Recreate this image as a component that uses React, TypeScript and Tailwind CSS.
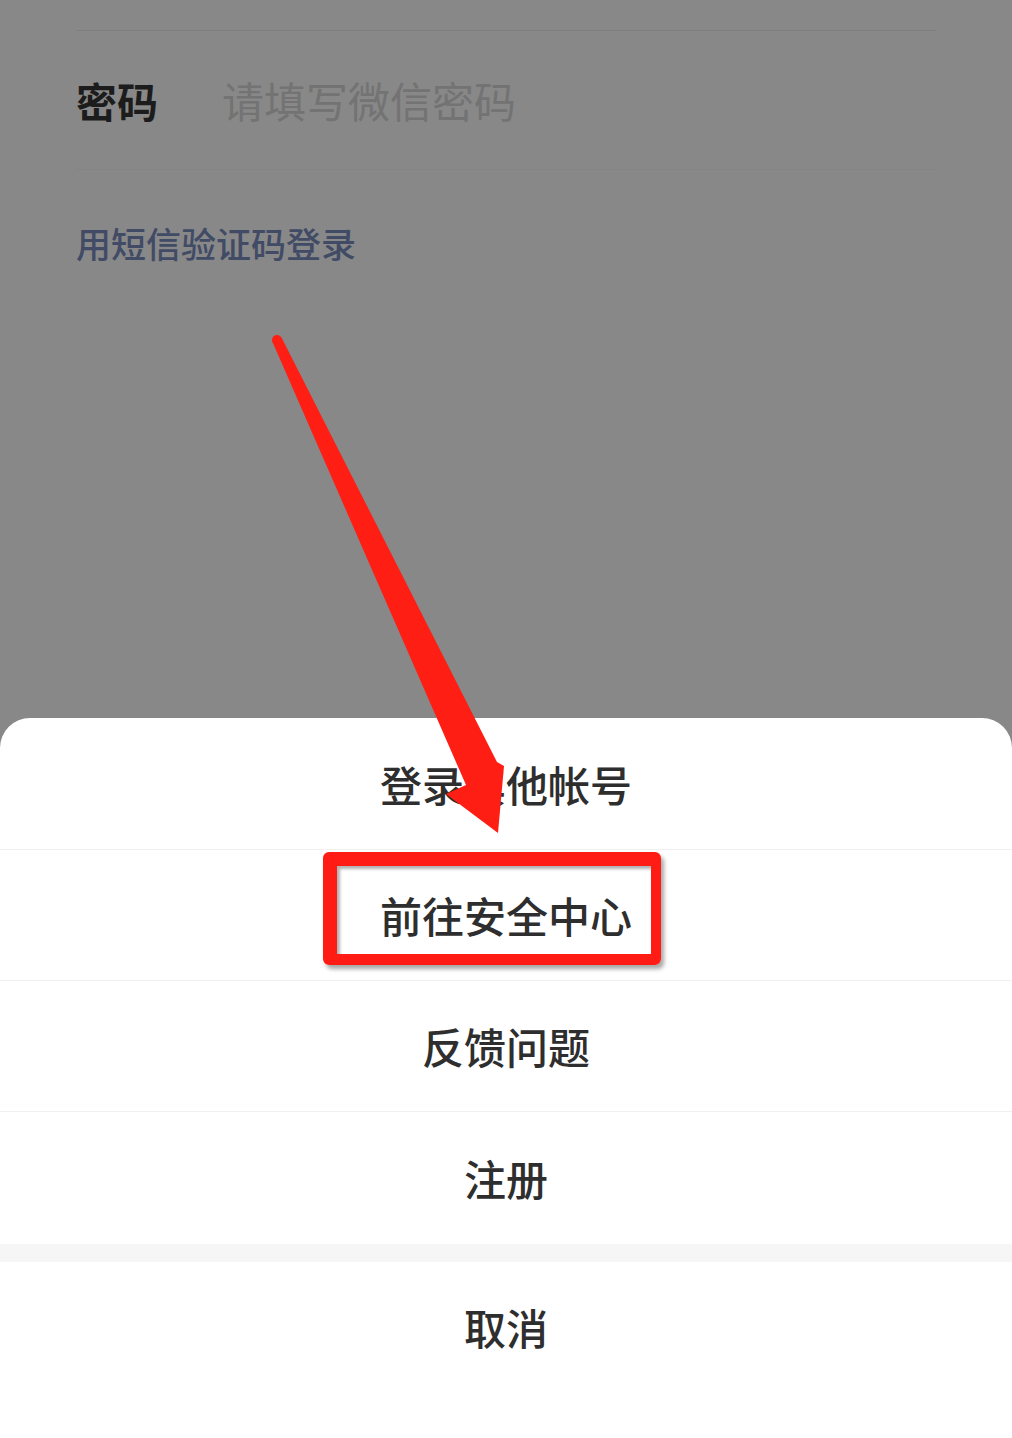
import React from "react";

const font = { fontFamily: '"Noto Sans CJK SC", "Noto Sans", sans-serif' };

function Row({ label, h, border = true }: { label: string; h: string; border?: boolean }) {
  return (
    <div
      className={`${h} flex items-center justify-center ${border ? "border-b border-[#f0f0f0]" : ""}`}
    >
      <span className="text-[42px] leading-none font-medium text-[#2e2e2e]">{label}</span>
    </div>
  );
}

export default function App() {
  return (
    <div className="relative w-[1012px] h-[1438px] overflow-hidden bg-[#888888] flex flex-col" style={font}>
      <div className="h-[718px] shrink-0 px-[76px] pt-[30px]">
        <div className="border-t border-[#7f7f7f]" />
        <div className="h-[139px] flex items-center border-b border-[#848484]">
          <span className="w-[146px] text-[41px] leading-none font-bold text-[#1c1c1c]">密码</span>
          <span className="text-[42px] leading-none text-[#737373]">请填写微信密码</span>
        </div>
        <div className="mt-[55px] text-[35px] leading-none font-medium text-[#414b66]">用短信验证码登录</div>
      </div>

      <div className="flex-1 bg-white rounded-t-[30px] flex flex-col">
        <Row label="登录其他帐号" h="h-[132px]" />
        <Row label="前往安全中心" h="h-[131px]" />
        <Row label="反馈问题" h="h-[131px]" />
        <Row label="注册" h="h-[132px]" border={false} />
        <div className="h-[18px] bg-[#f6f6f6]" />
        <Row label="取消" h="h-[130px]" border={false} />
      </div>

      {/* Red highlight box */}
      <div className="absolute left-[323px] top-[852px] w-[338px] h-[113px] rounded-[6px] border-t-[14px] border-l-[14px] border-r-[10px] border-b-[11px] border-[#ff1c14] shadow-[inset_4px_4px_3px_-1px_rgba(0,0,0,0.3),3px_4px_4px_rgba(0,0,0,0.35)]" />

      {/* Red arrow */}
      <svg className="absolute left-0 top-0" width="1012" height="1438" viewBox="0 0 1012 1438">
        <circle cx="277" cy="340" r="5" fill="#ff1e14" />
        <polygon
          points="272.5,342 281.5,337.5 497,762 504,766 498,833 446,794 466,785"
          fill="#ff1e14"
        />
      </svg>
    </div>
  );
}
